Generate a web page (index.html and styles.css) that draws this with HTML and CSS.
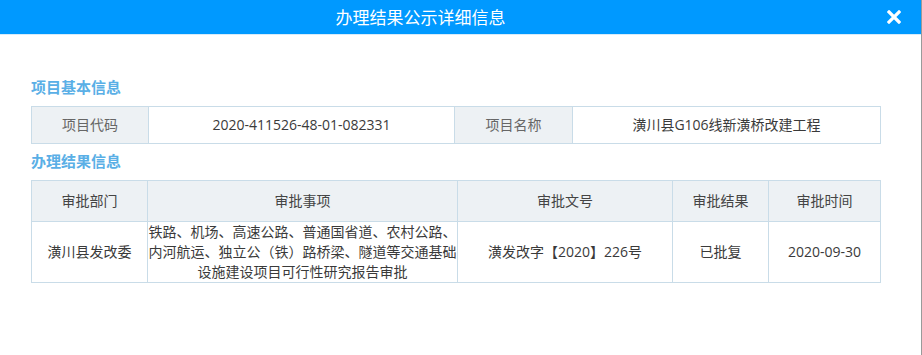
FILE: index.html
```html
<!DOCTYPE html>
<html>
<head>
    <meta charset="UTF-8">
    <meta name="viewport" content="width=device-width, initial-scale=1.0">
    <title>办理结果公示详细信息</title>
    <link rel="stylesheet" href="styles.css">
</head>
<body>
    <div class="dialog">
        <header class="dialog-header">
            <h1 class="dialog-title">办理结果公示详细信息</h1>
            <div class="dialog-close">
                <svg width="14" height="14" viewBox="0 0 14 14">
                    <path d="M2 2 L12 12 M12 2 L2 12" stroke="#fff" stroke-width="3.2" stroke-linecap="square"/>
                </svg>
            </div>
        </header>
        <main class="dialog-body">
            <h4 class="section-title first">项目基本信息</h4>
            <table class="info-table">
                <colgroup>
                    <col class="w117">
                    <col class="w306">
                    <col class="w118">
                    <col>
                </colgroup>
                <tr>
                    <td class="label">项目代码</td>
                    <td>2020-411526-48-01-082331</td>
                    <td class="label">项目名称</td>
                    <td>潢川县G106线新潢桥改建工程</td>
                </tr>
            </table>

            <h4 class="section-title">办理结果信息</h4>
            <table class="result-table">
                <colgroup>
                    <col class="w116">
                    <col class="w310">
                    <col class="w215">
                    <col class="w96">
                    <col>
                </colgroup>
                <thead>
                    <tr>
                        <th>审批部门</th>
                        <th>审批事项</th>
                        <th>审批文号</th>
                        <th>审批结果</th>
                        <th>审批时间</th>
                    </tr>
                </thead>
                <tbody>
                    <tr>
                        <td>潢川县发改委</td>
                        <td>铁路、机场、高速公路、普通国省道、农村公路、内河航运、独立公（铁）路桥梁、隧道等交通基础设施建设项目可行性研究报告审批</td>
                        <td>潢发改字【2020】226号</td>
                        <td>已批复</td>
                        <td>2020-09-30</td>
                    </tr>
                </tbody>
            </table>
        </main>
    </div>
</body>
</html>
```

FILE: styles.css
```css
body {
    margin: 0;
    padding: 0;
    background-color: #fff;
    font-family: "Open Sans", "Noto Sans CJK SC", sans-serif;
    font-size: 14px;
    color: #3a3a3a;
}

.dialog {
    width: 921px;
    height: 355px;
    border-right: 1px solid #9a9a9a;
}

.dialog-header {
    display: flex;
    align-items: center;
    height: 34px;
    background-color: #0099ff;
    border-bottom: 1px solid #d6ebfa;
}

.dialog-title {
    flex: 1;
    margin: 0;
    text-align: center;
    color: #fff;
    font-family: "Noto Sans CJK SC", sans-serif;
    font-size: 17px;
    font-weight: normal;
    line-height: 34px;
}

.dialog-close {
    width: 80px;
    display: flex;
    justify-content: flex-end;
    padding-right: 20px;
    box-sizing: border-box;
}

.dialog-close svg {
    display: block;
}

.dialog-body {
    padding: 0 40px 0 31px;
}

.section-title {
    margin: 5px 0 7px;
    font-family: "Noto Sans CJK SC", sans-serif;
    font-size: 15px;
    line-height: 24px;
    font-weight: bold;
    color: #5aafe6;
}

.section-title.first {
    margin-top: 40px;
}

table {
    width: 850px;
    table-layout: fixed;
    border-collapse: collapse;
}

td, th {
    border: 1px solid #c9dce8;
    text-align: center;
    line-height: 20px;
    font-weight: normal;
}

.info-table td {
    padding: 8px 0;
}

.info-table .label {
    background-color: #edf1f4;
    color: #666;
}

.result-table th {
    padding: 10px 0;
    background-color: #edf1f4;
    color: #444;
}

.result-table td {
    padding: 0;
}

.w116 { width: 116px; }
.w117 { width: 117px; }
.w118 { width: 118px; }
.w306 { width: 306px; }
.w310 { width: 310px; }
.w215 { width: 215px; }
.w96 { width: 96px; }
```
